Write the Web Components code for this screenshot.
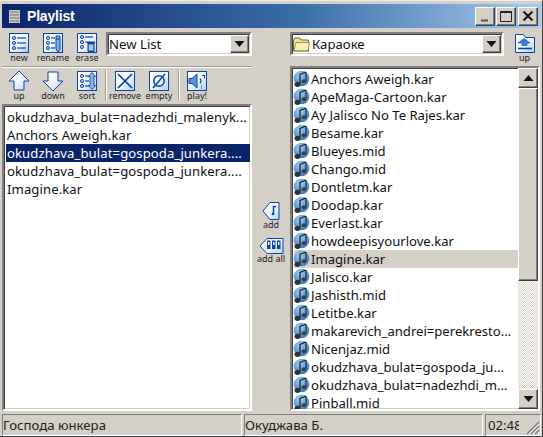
<!DOCTYPE html>
<html><head><meta charset="utf-8">
<style>
html,body{margin:0;padding:0;background:#d4d0c8}
body{width:543px;height:437px;overflow:hidden;font-family:"Noto Sans","Liberation Sans",sans-serif}
</style></head><body>
<pl-window>
  <pl-titlebar slot="title">Playlist</pl-titlebar>
  <pl-tool slot="left-top" icon="new">new</pl-tool><pl-tool slot="left-top" icon="rename">rename</pl-tool><pl-tool slot="left-top" icon="erase">erase</pl-tool>
  <pl-combo slot="left-combo" style="width:146px">New List</pl-combo>
  <pl-tool slot="left-row2" icon="up">up</pl-tool><pl-tool slot="left-row2" icon="down">down</pl-tool><pl-tool slot="left-row2" icon="sort">sort</pl-tool>
  <pl-sep slot="left-row2" style="margin:0 1px"></pl-sep>
  <pl-tool slot="left-row2" icon="remove">remove</pl-tool><pl-tool slot="left-row2" icon="empty">empty</pl-tool>
  <pl-sep slot="left-row2" style="margin:0 0 0 2px"></pl-sep>
  <pl-tool slot="left-row2" icon="play">play!</pl-tool>
  <pl-list slot="left-list" selected="2" items="okudzhava_bulat=nadezhdi_malenyk...|Anchors Aweigh.kar|okudzhava_bulat=gospoda_junkera....|okudzhava_bulat=gospoda_junkera....|Imagine.kar"></pl-list>
  <pl-tool slot="add" icon="add" style="width:38px">add</pl-tool>
  <pl-tool slot="addall" icon="addall" style="width:38px">add all</pl-tool>
  <pl-combo slot="right-combo" folder style="width:214px">Караоке</pl-combo>
  <pl-tool slot="right-up" icon="upfolder" style="width:21px">up</pl-tool>
  <pl-list slot="right-list" music scroll selected="10" dim items="Anchors Aweigh.kar|ApeMaga-Cartoon.kar|Ay Jalisco No Te Rajes.kar|Besame.kar|Blueyes.mid|Chango.mid|Dontletm.kar|Doodap.kar|Everlast.kar|howdeepisyourlove.kar|Imagine.kar|Jalisco.kar|Jashisth.mid|Letitbe.kar|makarevich_andrei=perekresto...|Nicenjaz.mid|okudzhava_bulat=gospoda_ju...|okudzhava_bulat=nadezhdi_m...|Pinball.mid"></pl-list>
  <pl-status slot="status"></pl-status>
</pl-window>
<script>
const B='#0a46a0';
const FONT='"Noto Sans","Liberation Sans",sans-serif';
const frame=(inner)=>`<rect x="1.5" y="1.5" width="19" height="19" fill="#fff" stroke="${B}"/><rect x="2" y="2" width="18" height="18" fill="url(#g)"/>`+inner;
const defs=`<defs><linearGradient id="g" x1="0" y1="0" x2="1" y2="1"><stop offset="0" stop-color="#fff"/><stop offset=".5" stop-color="#f2f6fc"/><stop offset="1" stop-color="#b5d0f0"/></linearGradient></defs>`;
const dots=(ys)=>ys.map(y=>`<circle cx="6" cy="${y}" r="1.6" fill="#9cc4ee" stroke="${B}" stroke-width=".9"/>`).join('');
const lines=(ys,x2)=>ys.map(y=>`<path d="M9 ${y}H${x2}" stroke="${B}" stroke-width="1.2"/>`).join('');
const ICONS={
 new:[22,22,frame(dots([6,11,16])+lines([6,11,16],18))],
 rename:[22,22,frame(dots([6,11,16])+lines([6,11,16],13)+`<path d="M14 4h4v13l-2 3-2-3z" fill="#7fb0ea" stroke="${B}"/><path d="M14 7h4" stroke="${B}"/>`)],
 erase:[22,22,frame(dots([5,10,15])+lines([5],17)+lines([10],11)+`<path d="M11 9.5h8v2h-8z" fill="${B}"/><path d="M12 11.5h6v8h-6z" fill="#5a94de" stroke="${B}"/><path d="M14 13v5M16 13v5" stroke="#fff"/>`)],
 up:[22,22,`<path d="M11 1 21 11h-5v9H6v-9H1z" fill="url(#g)" stroke="${B}" stroke-linejoin="round"/>`],
 down:[22,22,`<path d="M11 21 1 11h5V2h10v9h5z" fill="url(#g)" stroke="${B}" stroke-linejoin="round"/>`],
 sort:[22,22,frame(dots([6,11,16])+lines([6,11,16],13)+`<path d="M16 2.5 19.5 6.5H18V15.5h1.5L16 19.5 12.5 15.5H14V6.5h-1.5z" fill="#8ab8ee" stroke="${B}" stroke-width=".9"/>`)],
 remove:[22,22,frame(`<path d="M4 4 18 18M18 4 4 18" stroke="${B}" stroke-width="1.7"/>`)],
 empty:[22,22,frame(`<circle cx="11" cy="11" r="5.2" fill="none" stroke="${B}" stroke-width="1.5"/><path d="M5 18 17 4" stroke="${B}" stroke-width="1.5"/>`)],
 play:[22,22,frame(`<path d="M3 8.5h3L11 4v14l-5-4.500H3z" fill="#5a94de" stroke="${B}"/><path d="M14 8.5q2 2.500 0 5M16 5.5h2.500v3M15 16h1M15 18h1" fill="none" stroke="${B}" stroke-width="1.1"/>`)],
 add:[18,20,`<path d="M17 1.5V18.5H8L1 10 8 1.5z" fill="url(#g)" stroke="${B}"/><circle cx="11" cy="13" r="1.3" fill="${B}"/><path d="M11.5 13V5.500h2.500" fill="none" stroke="${B}" stroke-width="1.5"/>`],
 addall:[25,18,`<path d="M24 1.5V16.500H8L1 9 8 1.500z" fill="url(#g)" stroke="${B}"/>`+[8,13,18].map(x=>`<path d="M${x} 3.5h3.500V12h-3.500z" fill="${B}"/><path d="M${x+1} 5h1.500v3h-1.500z" fill="#fff"/>`).join('')],
 upfolder:[22,22,`<path d="M1.5 20.5V2.5h8l2 3h9v15z" fill="url(#g)" stroke="${B}"/><path d="M4 11 10 6.500 16 11H13V13.500H8V11z" fill="#2f7fe0" stroke="${B}" stroke-width=".6"/><path d="M4 16.500h14" stroke="${B}" stroke-width="1.6"/>`],
};
const icon=n=>{const [w,h,s]=ICONS[n];return `<svg width="${w}" height="${h}" viewBox="0 0 ${w} ${h}">${defs}${s}</svg>`};
const MUSIC=`<svg width="18" height="18" viewBox="0 0 18 18" style="flex:none;margin:0 1px 0 -2px"><defs><radialGradient id="m" cx=".4" cy=".3" r=".8"><stop offset="0" stop-color="#a5cdf2"/><stop offset="1" stop-color="#2f6fb8"/></radialGradient></defs><circle cx="9.5" cy="8.5" r="7.8" fill="url(#m)"/><path d="M8 14V4.500l6-2.500" fill="none" stroke="#1c2833" stroke-width="1.3"/><path d="M14 2v9" stroke="#1c2833" stroke-width="1.1"/><ellipse cx="5.5" cy="14.3" rx="3" ry="2.6" fill="#2e343a"/><ellipse cx="12" cy="11.3" rx="2.4" ry="2" fill="#3a4046"/></svg>`;
const FOLDER=`<svg width="17" height="15" viewBox="0 0 17 15"><path d="M.5 3 2 1h5l1.500 2h7v11H.5z" fill="#f6e08a" stroke="#6a6238"/><path d="M.8 13.800 3 5.500h13.500l-1.500 8.300z" fill="#fbeeb0" stroke="#8a7a40" stroke-width=".8"/></svg>`;
const TRI=(d)=>`<svg width="11" height="6" viewBox="0 0 11 6"><path d="${d?'M.5 0h10L5.500 6z':'M.5 6h10L5.500 0z'}" fill="#111"/></svg>`;
const BEVEL=`background:#d4d0c8;border:1px solid;border-color:#fff #404040 #404040 #fff;box-shadow:inset -1px -1px 0 #808080;box-sizing:border-box;`;
const SUNK=`border:2px solid;border-color:#808080 #fff #fff #808080;box-shadow:inset 1px 1px 0 #404040,inset -1px -1px 0 #d4d0c8;box-sizing:border-box;`;

class Base extends HTMLElement{connectedCallback(){if(!this.shadowRoot){this.attachShadow({mode:'open'}).innerHTML=this.render()}}}

customElements.define('pl-scrollbar',class extends Base{render(){return `<style>
:host{display:flex;flex-direction:column;width:20px;height:100%;flex:none;background:repeating-conic-gradient(#d4d0c8 0 25%,#fff 0 50%) 0 0/2px 2px}
.b{height:20px;${BEVEL}display:flex;align-items:center;justify-content:center;flex:none}
.th{height:193px;${BEVEL}flex:none}
.sp{flex:1}
</style><div class="b">${TRI(0)}</div><div class="th"></div><div class="sp"></div><div class="b">${TRI(1)}</div>`}});

customElements.define('pl-list',class extends Base{render(){
 const items=this.getAttribute('items').split('|'),sel=+this.getAttribute('selected'),music=this.hasAttribute('music'),dim=this.hasAttribute('dim');
 const rows=items.map((t,i)=>`<div class="row${i===sel?(dim?' dim':' sel'):''}">${music?MUSIC:''}<span>${t}</span></div>`).join('');
 return `<style>
:host{display:flex;width:250px;height:100%;flex:none;${SUNK}background:#fff;font:13.1px/18px ${FONT};color:#111;overflow:hidden}
.rows{flex:1 1 0;padding:2px 0 0 2px;min-width:0;overflow:hidden}
.row{height:18px;display:flex;align-items:center;white-space:nowrap;padding-left:${music?0:1}px}
.row span{letter-spacing:${music?0:.1}px}
.sel{background:#0a246a;color:#fff}
.dim{background:#d4d0c8}
</style><div class="rows">${rows}</div>${this.hasAttribute('scroll')?'<pl-scrollbar></pl-scrollbar>':''}`}});

customElements.define('pl-window',class extends Base{render(){return `<style>
:host{display:flex;flex-direction:column;width:543px;height:437px;box-sizing:border-box;padding:3px 1px 0 2px;background:#d4d0c8;border-top:1px solid #eee;border-right:1px solid #404040;border-bottom:1px solid #404040;color:#000}
.main{flex:1;display:grid;grid-template-columns:250px 38px 250px;min-height:0}
.left,.right{display:flex;flex-direction:column;min-height:0}
.r1{display:flex;align-items:flex-start;padding-top:4px;height:33px;box-sizing:border-box}
.tools{display:flex;width:104px}
.rule{margin:5px 0 1px;background:#a09c94;border-bottom:1px solid #fff;height:1px;width:250px}
.r2{display:flex;height:35px;align-items:flex-start;padding-top:1px;box-sizing:border-box}
.llist{flex:1;display:flex;min-height:0}
.mid{display:flex;flex-direction:column;align-items:center;padding-top:173px;gap:6px}
.gap{gap:10px}
.rlist{flex:1;display:flex;margin-top:5px;min-height:0}
</style>
<slot name="title"></slot>
<div class="main">
 <div class="left">
  <div class="r1"><div class="tools"><slot name="left-top"></slot></div><slot name="left-combo"></slot></div>
  <div class="rule"></div>
  <div class="r2"><slot name="left-row2"></slot></div>
  <div class="llist"><slot name="left-list"></slot></div>
 </div>
 <div class="mid"><slot name="add"></slot><slot name="addall"></slot></div>
 <div class="right">
  <div class="r1 gap"><slot name="right-combo"></slot><slot name="right-up"></slot></div>
  <div class="rlist"><slot name="right-list"></slot></div>
 </div>
</div>
<slot name="status"></slot>`}});

customElements.define('pl-titlebar',class extends Base{render(){return `<style>
:host{display:flex;align-items:center;height:24px;flex:none;background:linear-gradient(90deg,#0a246a 0%,#3a6ea5 55%,#a6caf0 100%);color:#fff;font:bold 14px "Liberation Sans",sans-serif;padding-left:7px;box-sizing:border-box}
.ic{margin-right:7px;display:flex}
.t{flex:1;letter-spacing:-.2px}
.btns{display:flex;margin-right:3px;gap:1px}
.b{width:20px;height:19px;${BEVEL}display:flex;align-items:center;justify-content:center}
</style>
<span class="ic"><svg width="11" height="13" viewBox="0 0 11 13"><rect width="11" height="13" fill="#c8c8c8"/><path d="M1 2h9M1 5h9M1 8h9M1 11h9" stroke="#777"/></svg></span>
<span class="t"><slot></slot></span>
<span class="btns">
<span class="b"><svg width="12" height="12"><path d="M2 10.500h7" stroke="#555" stroke-width="2"/></svg></span>
<span class="b"><svg width="14" height="12"><path d="M1.500 1.500h11v10h-11zM1 2.500h12" fill="none" stroke="#222"/></svg></span>
<span class="b" style="margin-left:1px"><svg width="12" height="12"><path d="M1.500 1.500 10.500 10.500M10.500 1.500 1.500 10.500" stroke="#111" stroke-width="2"/></svg></span>
</span>`}});

customElements.define('pl-tool',class extends Base{render(){return `<style>
:host{display:flex;flex-direction:column;align-items:center;width:34px;flex:none;font:9px/12px ${FONT};color:#222;white-space:nowrap}
svg{display:block}
.l{margin-top:-2px}
</style><div>${icon(this.getAttribute('icon'))}</div><div class="l"><slot></slot></div>`}});

customElements.define('pl-sep',class extends Base{render(){return `<style>
:host{display:block;width:2px;height:30px;background:#a09c94;border-right:1px solid #fff;box-sizing:border-box;flex:none}
</style>`}});

customElements.define('pl-combo',class extends Base{render(){const f=this.hasAttribute('folder');return `<style>
:host{display:flex;height:24px;${SUNK}background:#fff;align-items:center;font:13.2px ${FONT};color:#111;padding:1px;flex:none}
.t{flex:1;display:flex;align-items:center;gap:2px}
.b{width:19px;height:18px;${BEVEL}display:flex;align-items:center;justify-content:center}
</style><span class="t">${f?FOLDER:''}<slot></slot></span><span class="b">${TRI(1)}</span>`}});

customElements.define('pl-status',class extends Base{render(){return `<style>
:host{display:flex;height:22px;flex:none;margin-top:3px;gap:2px;font:13.2px ${FONT};color:#222}
.p{border:1px solid;border-color:#808080 #fff #fff #808080;display:flex;align-items:center;box-sizing:border-box;overflow:hidden;white-space:nowrap}
.g{position:relative;padding-left:2px}
.clip{width:31px;overflow:hidden}
svg{position:absolute;right:0;bottom:0}
</style><div class="p" style="width:240px">Господа юнкера</div><div class="p" style="width:239px">Окуджава Б.</div><div class="p g" style="flex:1"><span class="clip">02:48</span><svg width="15" height="15"><path d="M14 2 2 14M14 6 6 14M14 10 10 14" stroke="#808080" stroke-width="1.5"/><path d="M14 4 4 14M14 8 8 14M14 12 12 14" stroke="#fff"/></svg></div>`}});
</script>
</body></html>
